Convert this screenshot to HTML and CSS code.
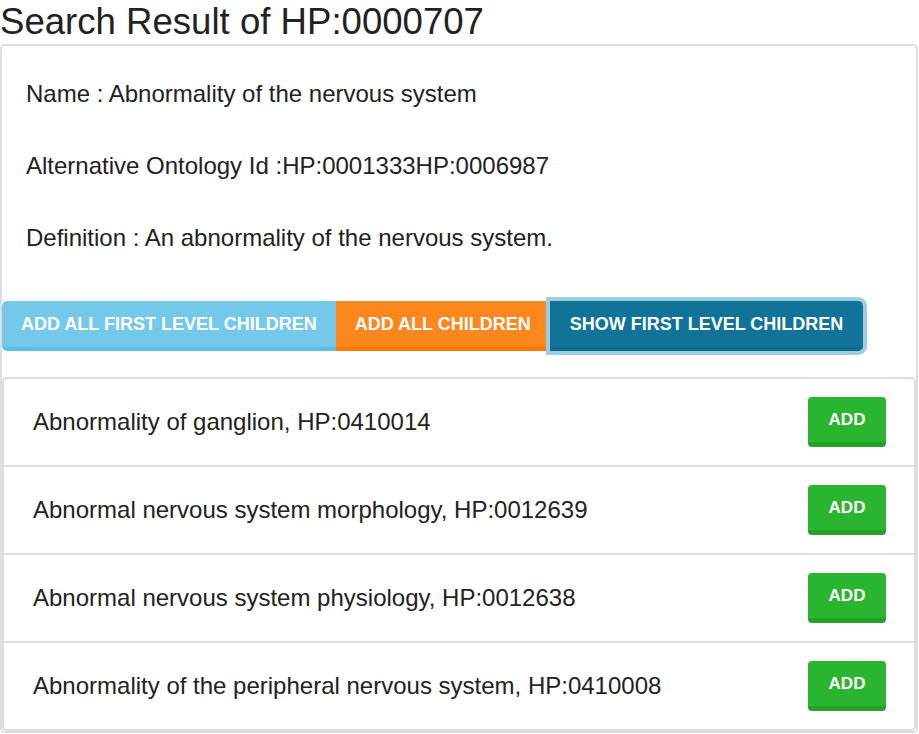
FILE: index.html
```html
<!DOCTYPE html>
<html>
<head>
<meta charset="utf-8">
<title>Search Result</title>
<link rel="stylesheet" href="styles.css">
</head>
<body>
<h1 class="title">Search Result of HP:0000707</h1>
<div class="panel">
  <div class="info">
    <p>Name : Abnormality of the nervous system</p>
    <p>Alternative Ontology Id :HP:0001333HP:0006987</p>
    <p class="last">Definition : An abnormality of the nervous system.</p>
  </div>
  <div class="btn-group">
    <button class="btn btn-info">ADD ALL FIRST LEVEL CHILDREN</button>
    <button class="btn btn-warning">ADD ALL CHILDREN</button>
    <button class="btn btn-primary focused">SHOW FIRST LEVEL CHILDREN</button>
  </div>
  <ul class="list">
    <li class="row"><span>Abnormality of ganglion, HP:0410014</span><button class="btn-add">ADD</button></li>
    <li class="row"><span>Abnormal nervous system morphology, HP:0012639</span><button class="btn-add">ADD</button></li>
    <li class="row"><span>Abnormal nervous system physiology, HP:0012638</span><button class="btn-add">ADD</button></li>
    <li class="row"><span>Abnormality of the peripheral nervous system, HP:0410008</span><button class="btn-add">ADD</button></li>
  </ul>
</div>
</body>
</html>
```
FILE: styles.css
```css
html {
  overflow: hidden;
}
body {
  margin: 0;
  font-family: "Liberation Sans", Arial, sans-serif;
  color: #222;
  background: #fff;
}
.title {
  margin: 0;
  font-size: 36.6px;
  font-weight: normal;
  line-height: 44px;
  color: #222;
}
.panel {
  margin-right: 1px;
  border: 2px solid #ddd;
  border-radius: 5px;
}
.info {
  padding: 34px 24px 0 24px;
}
.info p {
  margin: 0 0 44px 0;
  font-size: 24px;
  line-height: 28px;
}
.info p.last {
  margin-bottom: 49px;
}
.btn-group {
  display: flex;
}
.btn {
  height: 50px;
  box-sizing: border-box;
  border: 0;
  border-bottom: 4px solid;
  padding: 0 19px;
  margin: 0;
  font-family: "Liberation Sans", Arial, sans-serif;
  font-size: 18px;
  font-weight: bold;
  line-height: 46px;
  color: #fff;
}
.btn-info {
  background: #74c9eb;
  border-bottom-color: #5ebfe6;
  border-radius: 5px 0 0 5px;
}
.btn-warning {
  background: #fe871d;
  border-bottom-color: #fb7a07;
}
.btn-primary {
  background: #127399;
  border-bottom-color: #106a8d;
  border-radius: 0 5px 5px 0;
  padding: 0 20px;
}
.focused {
  box-shadow: 0 0 0 4px #9ccde1;
}
.list {
  list-style: none;
  margin: 26px 0 0 0;
  padding: 0;
  border: 2px solid #ddd;
  border-radius: 5px;
}
.row {
  display: flex;
  align-items: center;
  justify-content: space-between;
  height: 86px;
  padding: 0 28px 0 29px;
  font-size: 24px;
  border-bottom: 2px solid #ddd;
}
.row:last-child {
  border-bottom: 0;
}
.btn-add {
  height: 50px;
  box-sizing: border-box;
  width: 78px;
  padding: 0;
  border: 0;
  border-bottom: 5px solid #23a129;
  border-radius: 4px;
  background: #2ab530;
  color: #fff;
  font-family: "Liberation Sans", Arial, sans-serif;
  font-size: 17px;
  font-weight: bold;
  line-height: 45px;
}
```
